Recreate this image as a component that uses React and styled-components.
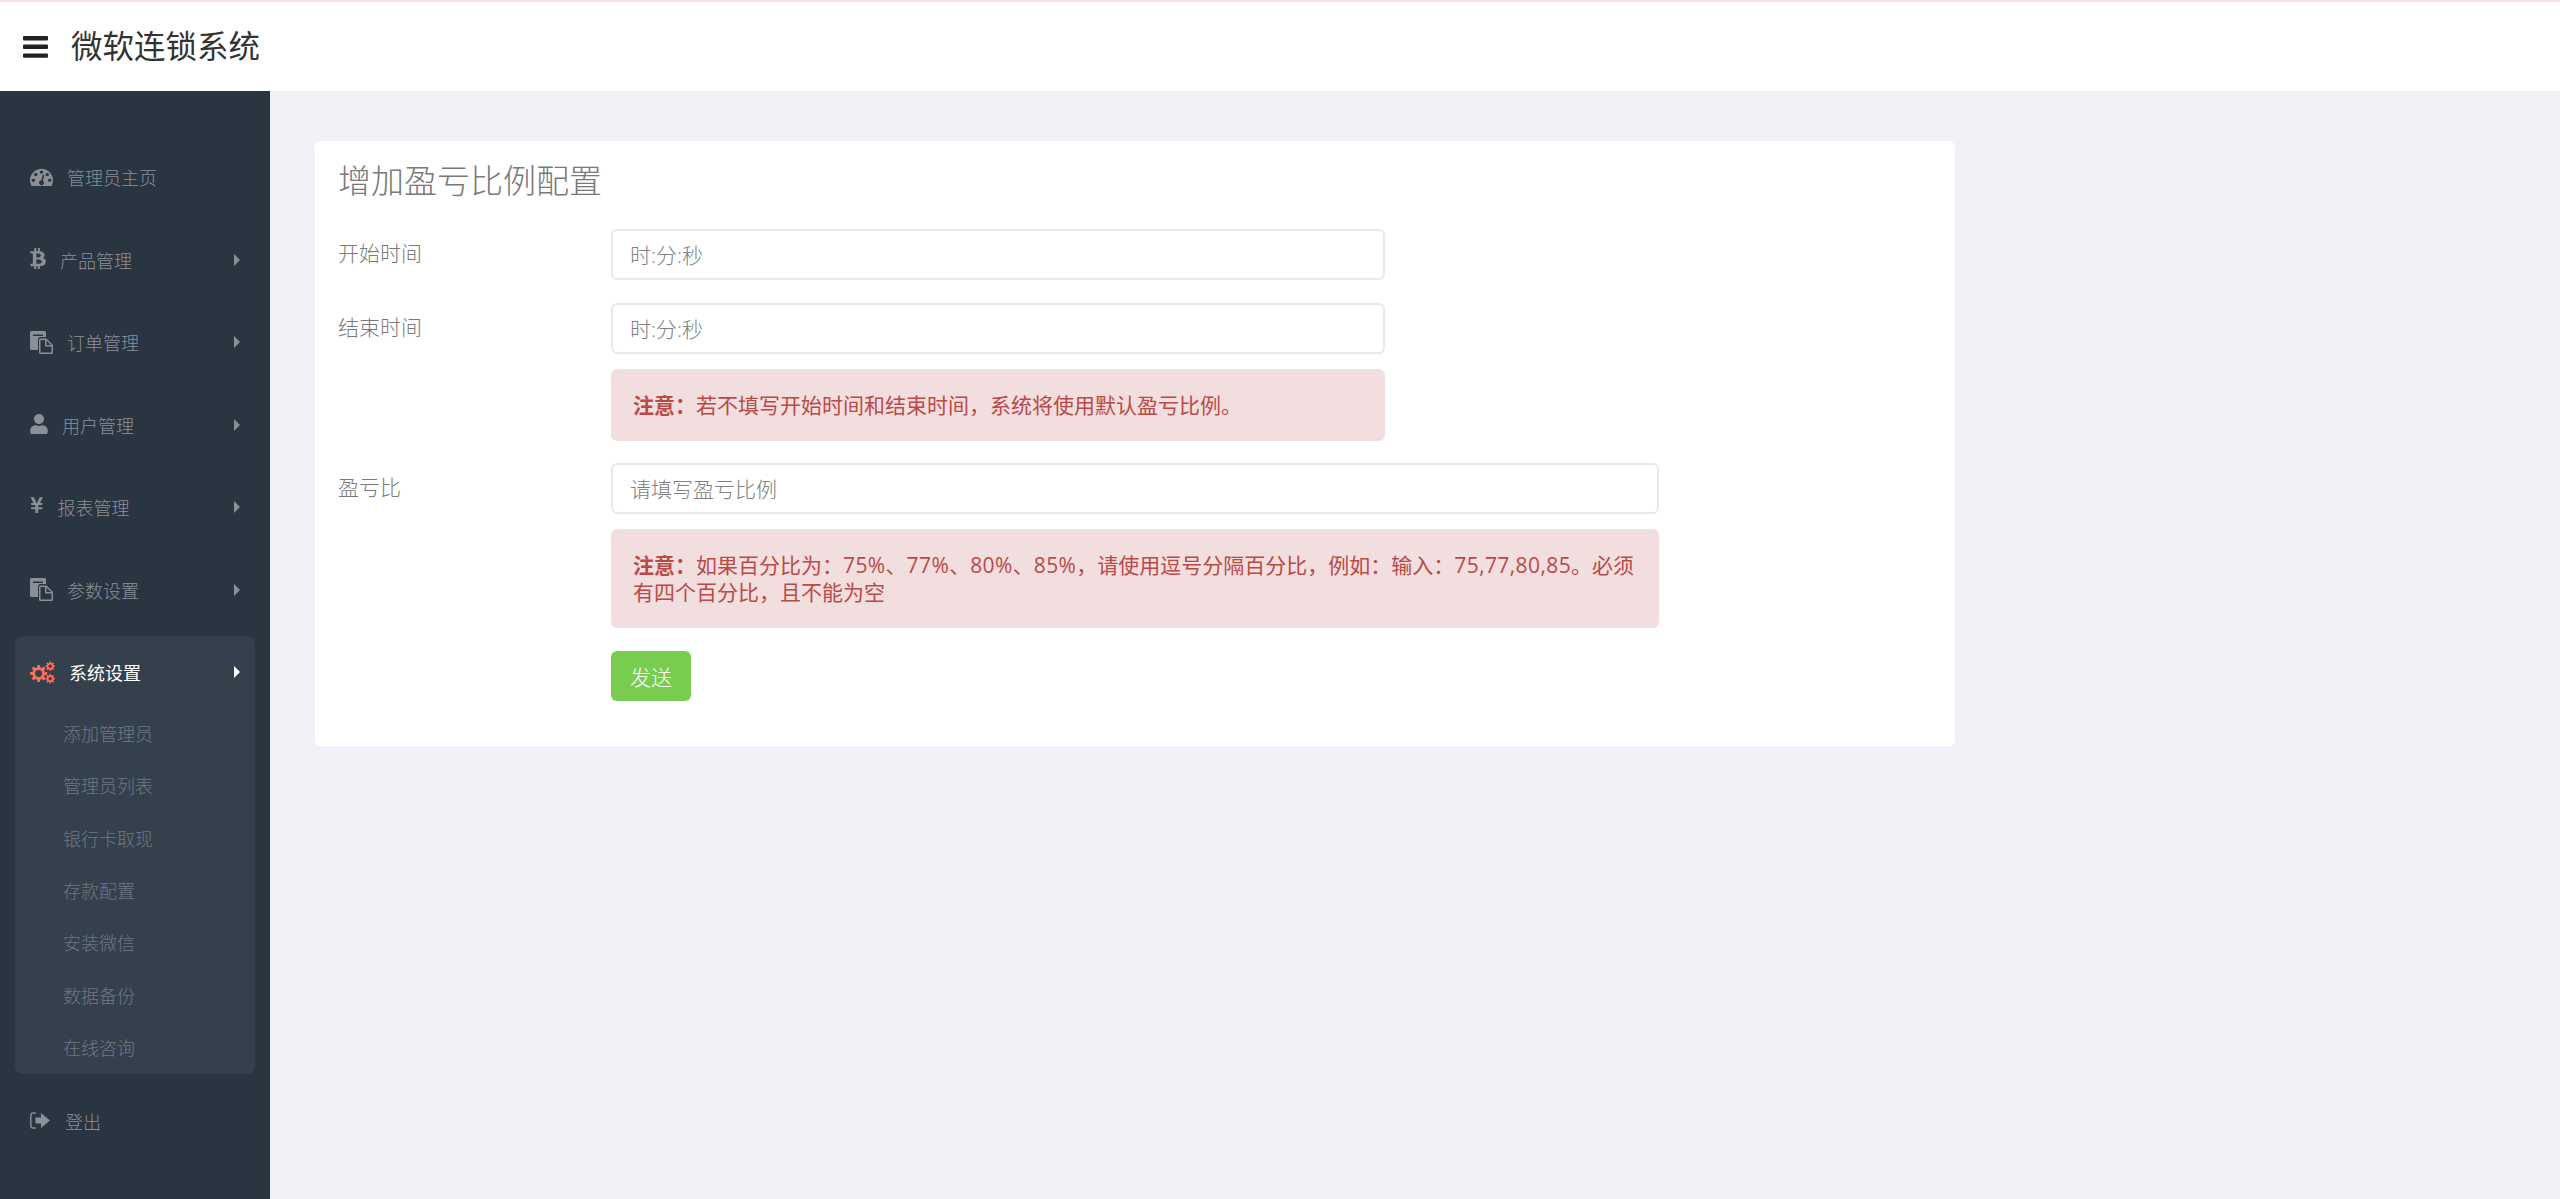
import React from "react";
import styled, { createGlobalStyle } from "styled-components";
import { FaBtc, FaUser, FaYenSign } from "react-icons/fa";

const GlobalStyle = createGlobalStyle`
  html, body {
    margin: 0;
    padding: 0;
    height: 100%;
  }

  body {
    background-color: #f1f2f7;
    font-family: "Open Sans", "Noto Sans CJK SC", sans-serif;
    font-weight: 300;
    color: #797979;
  }

  * {
    box-sizing: border-box;
  }
`;

const Page = styled.div`
  display: grid;
  grid-template-columns: 270px 1fr;
  grid-template-rows: 91px 1fr;
  height: 100vh;
  overflow: hidden;
`;

const TopBar = styled.header`
  grid-column: 1 / 3;
  display: flex;
  align-items: center;
  gap: 23px;
  padding-left: 23px;
  background-color: #ffffff;
  border-top: 2px solid #f8dfe4;
`;

const Brand = styled.div`
  padding-bottom: 6px;
  font-size: 31.5px;
  font-weight: 400;
  color: #333333;
`;

const Sidebar = styled.nav`
  display: flex;
  flex-direction: column;
  gap: 10.5px;
  padding: 50px 15px 0;
  background-color: #2a3542;
`;

const Group = styled.div`
  border-radius: 8px;
  background-color: ${(p) => (p.$open ? "#35404d" : "transparent")};
`;

const NavItem = styled.a`
  display: flex;
  align-items: center;
  gap: 14px;
  height: 72px;
  padding: 0 15px;
  font-size: 18px;
  color: ${(p) => (p.$active ? "#ffffff" : "#8b9097")};
  font-weight: ${(p) => (p.$active ? 400 : 300)};

  svg.lead {
    flex: none;
    fill: ${(p) => (p.$active ? "#ff6c60" : "#8b9097")};
  }
`;

const Caret = styled.span`
  margin-left: auto;
  width: 0;
  height: 0;
  border-top: 6px solid transparent;
  border-bottom: 6px solid transparent;
  border-left: 6px solid ${(p) => (p.$active ? "#ffffff" : "#8b9097")};
`;

const SubLink = styled.a`
  display: flex;
  align-items: center;
  height: 52.3px;
  padding: 0 0 2px 48px;
  font-size: 18px;
  color: #6e7883;
`;

const BtcIcon = styled(FaBtc)`
  width: 16px;
  height: 21px;
  margin-top: -2px;
`;

const UserIcon = styled(FaUser)`
  width: 18px;
  height: 20px;
  margin-top: -2px;
`;

const YenIcon = styled(FaYenSign)`
  width: 13.5px;
  height: 18px;
  margin-top: -4px;
`;

const Main = styled.main`
  padding: 50px 0 0 45px;
`;

const Card = styled.section`
  width: 1640px;
  padding: 20px 23px 45px;
  border-radius: 6px;
  background-color: #ffffff;
`;

const Title = styled.h1`
  margin: 0 0 28px;
  font-size: 33px;
  font-weight: 300;
  line-height: 40px;
  color: #797979;
`;

const FormRow = styled.div`
  display: grid;
  grid-template-columns: 273px 1fr;
  margin-bottom: ${(p) => p.$gap || 23}px;
`;

const Label = styled.label`
  align-self: start;
  font-size: 21px;
  line-height: 49px;
  color: #797979;
`;

const Controls = styled.div`
  display: flex;
  flex-direction: column;
  gap: 15px;
  width: ${(p) => p.$width}px;
`;

const Input = styled.input`
  width: 100%;
  height: 51px;
  padding: 0 17px;
  border: 2px solid #e8e8ea;
  border-radius: 6px;
  outline: none;
  font-family: inherit;
  font-size: 21px;
  font-weight: 300;
  color: #555555;

  &::placeholder {
    color: #808080;
    opacity: 1;
  }
`;

const Alert = styled.div`
  padding: 22.5px 22px;
  border-radius: 6px;
  background-color: #f2dede;
  font-size: 21px;
  font-weight: 400;
  line-height: 27px;
  color: #b94a48;

  strong {
    font-weight: 700;
  }
`;

const Num = styled.span`
  letter-spacing: 0.4px;
`;

const Submit = styled.button`
  display: block;
  width: 80px;
  height: 50px;
  margin-left: 273px;
  padding: 0;
  border: none;
  border-radius: 6px;
  background-color: #78cd51;
  font-family: inherit;
  font-size: 21px;
  font-weight: 300;
  color: #ffffff;
`;

const Hamburger = () => (
  <svg width="25" height="22" viewBox="0 0 25 22" fill="#222222">
    <rect y="0" width="25" height="4.4" rx="1" />
    <rect y="8.6" width="25" height="4.4" rx="1" />
    <rect y="17.4" width="25" height="4.4" rx="1" />
  </svg>
);

const GaugeIcon = () => (
  <svg className="lead" width="23" height="18" viewBox="0 256 1792 1280">
    <path d="M384 1152q0-53-37.500-90.500t-90.500-37.500-90.500 37.500-37.500 90.500 37.500 90.500 90.500 37.500 90.500-37.500 37.500-90.500zm192-448q0-53-37.500-90.500t-90.500-37.500-90.500 37.500-37.500 90.500 37.500 90.500 90.500 37.500 90.500-37.500 37.500-90.500zm428 481l101-382q6-26-7.500-48.500t-38.500-29.500-48 6.500-30 39.500l-101 382q-60 5-107 43.500t-63 98.500q-20 77 20 146t117 89 146-20 89-117q16-60-6-117t-72-91zm660-33q0-53-37.500-90.500t-90.500-37.500-90.500 37.500-37.500 90.500 37.500 90.500 90.500 37.500 90.500-37.500 37.500-90.500zm-640-640q0-53-37.500-90.500t-90.500-37.500-90.500 37.500-37.500 90.500 37.500 90.500 90.500 37.500 90.500-37.500 37.500-90.500zm448 192q0-53-37.500-90.500t-90.500-37.500-90.500 37.500-37.500 90.500 37.500 90.500 90.500 37.500 90.500-37.500 37.500-90.500zm320 448q0 261-141 483-19 29-54 29h-1402q-35 0-54-29-141-221-141-483 0-182 71-348t191-286 286-191 348-71 348 71 286 191 191 286 71 348z" />
  </svg>
);

const FilesIcon = () => (
  <svg className="lead" width="23" height="23" viewBox="0 0 23 23">
    <path
      fillRule="evenodd"
      d="M1.500 0H14.500A1.500 1.500 0 0 1 16 1.500V6H10.500A2.500 2.500 0 0 0 8 8.500V19H1.500A1.500 1.500 0 0 1 0 17.500V1.500A1.500 1.500 0 0 1 1.500 0ZM3 3.500V5H13V3.500Z"
    />
    <path
      fillRule="evenodd"
      d="M10.500 7.500H16.500L23 14V21.500A1.500 1.500 0 0 1 21.500 23H10.500A1.500 1.500 0 0 1 9 21.500V9A1.500 1.500 0 0 1 10.500 7.500ZM10.500 9V21.500H21.500V15.500H16A1 1 0 0 1 15 14.500V9ZM16.500 9.500V14H21Z"
    />
  </svg>
);

// gear outline with square teeth, hole cut by evenodd
const gear = (cx, cy, r, teeth, hole) => {
  const inner = r * 0.74;
  const step = (Math.PI * 2) / teeth;
  const pt = (rad, a) => `${(cx + rad * Math.cos(a)).toFixed(2)} ${(cy + rad * Math.sin(a)).toFixed(2)}`;
  let d = "";
  for (let i = 0; i < teeth; i++) {
    const a = i * step;
    d += `${i ? "L" : "M"}${pt(inner, a - step * 0.3)}L${pt(r, a - step * 0.2)}L${pt(r, a + step * 0.2)}L${pt(inner, a + step * 0.3)}`;
  }
  d += `Z M${cx - hole} ${cy}a${hole} ${hole} 0 1 0 ${hole * 2} 0a${hole} ${hole} 0 1 0 ${-hole * 2} 0Z`;
  return d;
};

const CogsIcon = () => (
  <svg className="lead" width="25" height="23" viewBox="0 0 26 23">
    <path fillRule="evenodd" d={gear(9, 12.5, 9, 8, 3.6)} />
    <path fillRule="evenodd" d={gear(21, 5, 5, 8, 1.8)} />
    <path fillRule="evenodd" d={gear(21, 18, 5, 8, 1.8)} />
  </svg>
);

const LogoutIcon = () => (
  <svg className="lead" width="21" height="17" viewBox="0 0 21 17">
    <path d="M6 1H3A2.500 2.500 0 0 0 .8 3.500V13.500A2.500 2.500 0 0 0 3 16H6" fill="none" stroke="#7f8c99" strokeWidth="1.500" />
    <path d="M5.500 5.500H11V1L20 8.500 11 16V11.500H5.500Z" />
  </svg>
);

const menu = [
  { label: "管理员主页", icon: <GaugeIcon />, plain: true },
  { label: "产品管理", icon: <BtcIcon className="lead" /> },
  { label: "订单管理", icon: <FilesIcon /> },
  { label: "用户管理", icon: <UserIcon className="lead" /> },
  { label: "报表管理", icon: <YenIcon className="lead" /> },
  { label: "参数设置", icon: <FilesIcon /> },
];

const subMenu = ["添加管理员", "管理员列表", "银行卡取现", "存款配置", "安装微信", "数据备份", "在线咨询"];

const App = () => {
  return (
    <Page>
      <GlobalStyle />
      <TopBar>
        <Hamburger />
        <Brand>微软连锁系统</Brand>
      </TopBar>

      <Sidebar>
        {menu.map((item) => (
          <Group key={item.label}>
            <NavItem>
              {item.icon}
              {item.label}
              {!item.plain && <Caret />}
            </NavItem>
          </Group>
        ))}
        <Group $open>
          <NavItem $active>
            <CogsIcon />
            系统设置
            <Caret $active />
          </NavItem>
          {subMenu.map((name) => (
            <SubLink key={name}>{name}</SubLink>
          ))}
        </Group>
        <Group>
          <NavItem>
            <LogoutIcon />
            登出
          </NavItem>
        </Group>
      </Sidebar>

      <Main>
        <Card>
          <Title>增加盈亏比例配置</Title>
          <FormRow>
            <Label>开始时间</Label>
            <Controls $width={774}>
              <Input placeholder="时:分:秒" />
            </Controls>
          </FormRow>
          <FormRow $gap={22}>
            <Label>结束时间</Label>
            <Controls $width={774}>
              <Input placeholder="时:分:秒" />
              <Alert>
                <strong>注意：</strong>若不填写开始时间和结束时间，系统将使用默认盈亏比例。
              </Alert>
            </Controls>
          </FormRow>
          <FormRow>
            <Label>盈亏比</Label>
            <Controls $width={1048}>
              <Input placeholder="请填写盈亏比例" />
              <Alert>
                <strong>注意：</strong>如果百分比为：<Num>75%</Num>、<Num>77%</Num>、<Num>80%</Num>、<Num>85%</Num>
                ，请使用逗号分隔百分比，例如：输入：<Num>75,77,80,85</Num>。必须有四个百分比，且不能为空
              </Alert>
            </Controls>
          </FormRow>
          <Submit>发送</Submit>
        </Card>
      </Main>
    </Page>
  );
};

export default App;
